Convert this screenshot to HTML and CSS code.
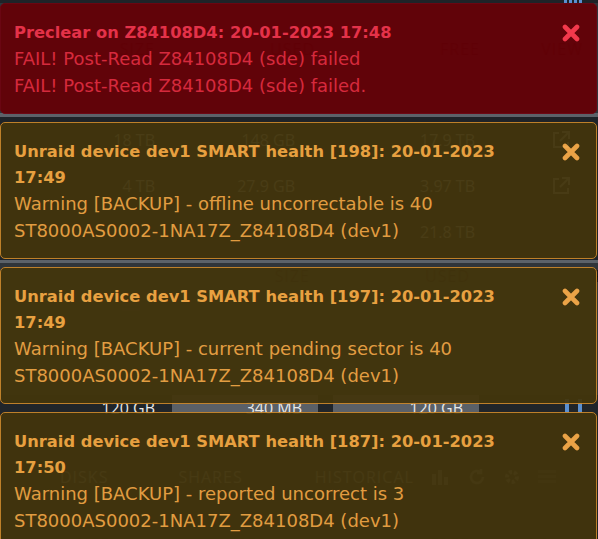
FILE: index.html
```html
<!DOCTYPE html>
<html lang="en">
<head>
    <meta charset="UTF-8">
    <meta name="viewport" content="width=device-width, initial-scale=1.0">
    <title>Dashboard</title>
    <link rel="stylesheet" href="styles.css">
</head>
<body>
    <!-- Dashboard tiles underneath the notifications -->
    <div class="dash">
        <div class="strip"><span class="strip-icon"></span></div>

        <div class="thead first">
            <span>SIZE</span><span>USED</span><span>FREE</span><span>VIEW</span>
        </div>
        <div class="sep"></div>

        <div class="rows">
            <div class="row">
                <span>18 TB</span><span class="c2">148 GB</span><span class="c3">17.9 TB</span>
                <span class="ext"><svg width="20" height="20" viewBox="0 0 20 20"><path d="M8 3H3v14h14v-5M11 2h7v7M18 2l-9 9" fill="none" stroke="#9aa0a6" stroke-width="2"/></svg></span>
            </div>
            <div class="row">
                <span>4 TB</span><span class="c2">27.9 GB</span><span class="c3">3.97 TB</span>
                <span class="ext"><svg width="20" height="20" viewBox="0 0 20 20"><path d="M8 3H3v14h14v-5M11 2h7v7M18 2l-9 9" fill="none" stroke="#9aa0a6" stroke-width="2"/></svg></span>
            </div>
            <div class="row">
                <span></span><span class="c2"></span><span class="c3">21.8 TB</span><span></span>
            </div>
        </div>
        <div class="sep thin"></div>

        <div class="thead second">
            <div class="tool"><span class="lines"></span></div>
            <div class="labels">
                <span>SIZE</span><span>USED</span><span>FREE</span><span>VIEW</span>
            </div>
        </div>

        <div class="bars">
            <span class="bar dark">120 GB</span>
            <span class="bar grey">340 MB</span>
            <span class="bar dark short"></span>
            <span class="bar grey">120 GB</span>
            <span class="bar dark end"><i></i><i></i></span>
        </div>

        <div class="tabs">
            <span class="tab">DISKS</span>
            <span class="tab">SHARES</span>
            <span class="tab wide">HISTORICAL</span>
            <span class="tab-icons">
                <svg width="20" height="18" viewBox="0 0 20 18"><path d="M2 17V6h4v11M8 17V2h4v15M14 17V9h4v8" fill="#6a6f74"/></svg>
                <svg width="18" height="18" viewBox="0 0 18 18"><path d="M15 9a6 6 0 1 1-2-4.5M13 1v4h-4" fill="none" stroke="#6a6f74" stroke-width="2.5"/></svg>
                <svg width="16" height="16" viewBox="0 0 16 16"><circle cx="8" cy="8" r="5" fill="none" stroke="#6a6f74" stroke-width="4" stroke-dasharray="3 2"/></svg>
                <span class="lines"></span>
            </span>
        </div>
        <div class="thead third">
            <span>SIZE</span><span>USED</span><span>FREE</span><span>LOG</span>
        </div>
    </div>

    <!-- Notification stack -->
    <div class="growl">
        <div class="note alert">
            <div class="note-text">
                <div class="note-title">Preclear on Z84108D4: 20-01-2023 17:48</div>
                <div class="note-body">FAIL! Post-Read Z84108D4 (sde) failed<br>FAIL! Post-Read Z84108D4 (sde) failed.</div>
            </div>
            <span class="note-close"><svg width="18" height="18" viewBox="0 0 18 18"><path d="M3 3l12 12M15 3L3 15" stroke="currentColor" stroke-width="4.6" stroke-linecap="round"/></svg></span>
        </div>

        <div class="note warning">
            <div class="note-text">
                <div class="note-title">Unraid device dev1 SMART health [198]: 20-01-2023 17:49</div>
                <div class="note-body">Warning [BACKUP] - offline uncorrectable is 40<br>ST8000AS0002-1NA17Z_Z84108D4 (dev1)</div>
            </div>
            <span class="note-close"><svg width="18" height="18" viewBox="0 0 18 18"><path d="M3 3l12 12M15 3L3 15" stroke="currentColor" stroke-width="4.6" stroke-linecap="round"/></svg></span>
        </div>

        <div class="note warning">
            <div class="note-text">
                <div class="note-title">Unraid device dev1 SMART health [197]: 20-01-2023 17:49</div>
                <div class="note-body">Warning [BACKUP] - current pending sector is 40<br>ST8000AS0002-1NA17Z_Z84108D4 (dev1)</div>
            </div>
            <span class="note-close"><svg width="18" height="18" viewBox="0 0 18 18"><path d="M3 3l12 12M15 3L3 15" stroke="currentColor" stroke-width="4.6" stroke-linecap="round"/></svg></span>
        </div>

        <div class="note warning">
            <div class="note-text">
                <div class="note-title">Unraid device dev1 SMART health [187]: 20-01-2023 17:50</div>
                <div class="note-body">Warning [BACKUP] - reported uncorrect is 3<br>ST8000AS0002-1NA17Z_Z84108D4 (dev1)</div>
            </div>
            <span class="note-close"><svg width="18" height="18" viewBox="0 0 18 18"><path d="M3 3l12 12M15 3L3 15" stroke="currentColor" stroke-width="4.6" stroke-linecap="round"/></svg></span>
        </div>
    </div>
</body>
</html>
```

FILE: styles.css
```css
body {
    margin: 0;
    font-family: "DejaVu Sans", Verdana, sans-serif;
    font-size: 16px;
    background-color: #1e2328;
    overflow: hidden;
}

/* ---- dashboard underneath ---- */

.dash {
    width: 598px;
    height: 539px;
    overflow: hidden;
    color: #b8b8b8;
    font-family: "Open Sans", sans-serif;
}

.strip {
    height: 3px;
    position: relative;
    background-color: #1e2328;
}

.strip-icon {
    position: absolute;
    left: 564px;
    top: 0;
    width: 19px;
    height: 3px;
    background: repeating-linear-gradient(90deg, #5a8fd0 0 3px, transparent 3px 5px);
}

.thead,
.row,
.labels {
    display: grid;
    grid-template-columns: 155px 160px 165px 103px;
    line-height: 26px;
}

.thead span,
.labels span,
.row span {
    text-align: right;
}

.thead,
.labels {
    letter-spacing: 1px;
    color: #0e1012;
}

.thead.first {
    height: 77px;
    padding-top: 33px;
    background-color: #30353a;
}

.sep {
    height: 4px;
    background-color: #5c6269;
}

.sep.thin {
    height: 3px;
}

.rows {
    height: 143px;
}

.row {
    height: 46px;
    align-items: center;
}

.row .c2 {
    padding-right: 20px;
}

.row .c3 {
    padding-right: 5px;
}

.ext {
    display: flex;
    justify-content: flex-end;
    padding-right: 12px;
}

.thead.second {
    height: 132px;
    background-color: #30353a;
}

.tool {
    height: 84px;
    display: flex;
    justify-content: flex-end;
    align-items: center;
    padding-right: 15px;
}

.lines {
    width: 18px;
    height: 14px;
    background: repeating-linear-gradient(180deg, #3a3f44 0 3px, transparent 3px 5px);
}

.bars {
    height: 18px;
    display: flex;
    line-height: 18px;
    color: #e8e8e8;
}

.bar {
    text-align: right;
    padding-top: 4px;
}

.bar.dark {
    width: 155px;
    padding-right: 17px;
    background-color: #20252a;
}

.bar.grey {
    width: 130px;
    padding-right: 16px;
    background-color: #5a6068;
}

.bar.short {
    width: 15px;
    padding-right: 0;
}

.bar.end {
    flex: 1;
    padding-right: 0;
    display: flex;
    gap: 9px;
    padding-left: 86px;
}

.bar.end i {
    width: 4px;
    background-color: #5a8fd0;
}

.tabs {
    height: 108px;
    display: flex;
    align-items: center;
    padding-top: 10px;
    letter-spacing: 1px;
    color: #8a8e92;
}

.tab {
    margin-left: 60px;
}

.tab + .tab {
    margin-left: 70px;
}

.tab.wide {
    margin-left: 72px;
}

.tab-icons {
    display: flex;
    align-items: center;
    gap: 18px;
    margin-left: 16px;
}

.thead.third {
    padding-top: 0;
    grid-template-columns: 110px 160px 200px 80px;
}

/* ---- notifications ---- */

.growl {
    position: absolute;
    top: 3px;
    left: 0;
    width: 597px;
    display: flex;
    flex-direction: column;
    gap: 8px;
}

.note {
    display: flex;
    align-items: flex-start;
    padding: 16px 16px 14px 13px;
    border: 1px solid;
    border-radius: 5px;
    opacity: 0.94;
}

.note-text {
    flex: 1;
    padding-right: 30px;
}

.note-title {
    font-weight: bold;
    font-size: 16.3px;
    line-height: 26px;
}

.note-body {
    font-size: 18px;
    line-height: 26.5px;
}

.note-close {
    display: flex;
    align-items: center;
    height: 26px;
}

.alert {
    background-color: #650006;
    border-color: #6e0410;
    color: #e02a3e;
}

.alert .note-title {
    color: #f0324a;
}

.alert .note-close {
    color: #ff3a4e;
}

.warning {
    background-color: #43350c;
    border-color: #c8862a;
    color: #eea443;
}

.warning .note-title {
    color: #f4a842;
}

.warning .note-close {
    color: #f7aa48;
}
```
